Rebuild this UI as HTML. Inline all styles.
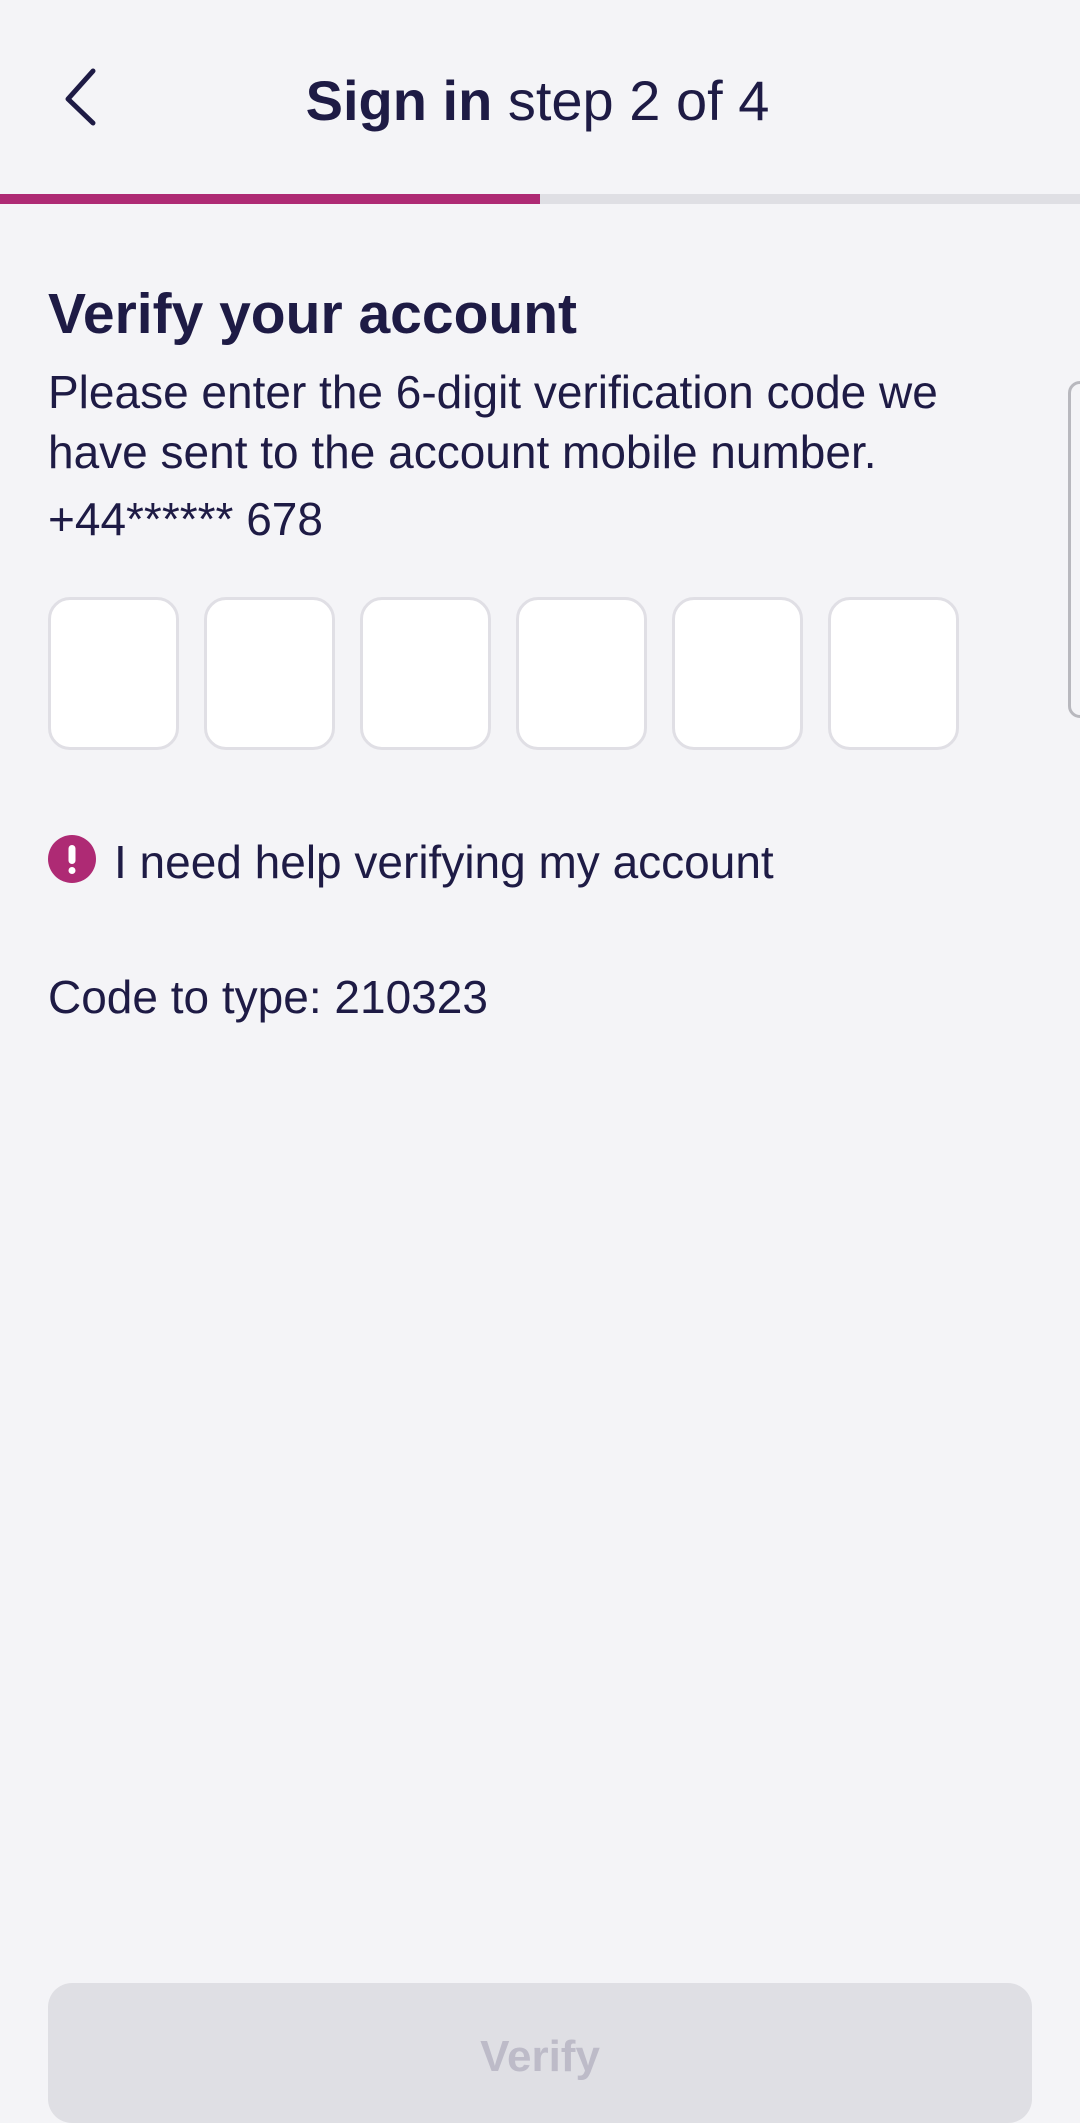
<!DOCTYPE html>
<html><head><meta charset="utf-8"><style>
*{margin:0;padding:0;box-sizing:border-box}
html,body{width:1080px;height:2097px;overflow:hidden;background:#f4f4f7;font-family:"Liberation Sans",sans-serif;color:#1e1b45}
.t{position:absolute;white-space:nowrap;line-height:1}
.box{position:absolute;top:597px;width:131px;height:153px;background:#fff;border:3px solid #e0dfe5;border-radius:22px}
</style></head><body>
<svg style="position:absolute;left:60px;top:68px" width="44" height="62" viewBox="0 0 44 62"><path d="M33 6 L8 34 L33 58" fill="none" stroke="#1e1b45" stroke-width="5" stroke-linecap="round" stroke-linejoin="round" transform="translate(0,-3)"/></svg>
<div class="t" style="left:0;width:1075px;text-align:center;top:73px;font-size:56px"><b>Sign in</b> step 2 of 4</div>
<div style="position:absolute;left:0;top:194px;width:1080px;height:10px;background:#dfdfe4"></div>
<div style="position:absolute;left:0;top:194px;width:540px;height:10px;background:#ae2a74"></div>
<div class="t" style="left:48px;top:286px;font-size:57px;font-weight:bold">Verify your account</div>
<div class="t" style="left:48px;top:369px;font-size:46px">Please enter the 6-digit verification code we</div>
<div class="t" style="left:48px;top:429px;font-size:46px">have sent to the account mobile number.</div>
<div class="t" style="left:48px;top:496px;font-size:46px">+44****** 678</div>
<div style="position:absolute;left:1068px;top:381px;width:40px;height:337px;border:3px solid #b8b8be;border-radius:12px"></div>
<div class="box" style="left:48px"></div>
<div class="box" style="left:204px"></div>
<div class="box" style="left:360px"></div>
<div class="box" style="left:516px"></div>
<div class="box" style="left:672px"></div>
<div class="box" style="left:828px"></div>
<svg style="position:absolute;left:48px;top:835px" width="48" height="48" viewBox="0 0 48 48"><circle cx="24" cy="24" r="24" fill="#ae2a74"/><rect x="20.5" y="10" width="7" height="19" rx="3.5" fill="#fff"/><circle cx="24" cy="35.5" r="3.5" fill="#fff"/></svg>
<div class="t" style="left:114px;top:839px;font-size:46px">I need help verifying my account</div>
<div class="t" style="left:48px;top:974px;font-size:46px">Code to type: 210323</div>
<div style="position:absolute;left:48px;top:1983px;width:984px;height:140px;background:#dfdfe4;border-radius:24px"></div>
<div class="t" style="left:48px;width:984px;text-align:center;top:2035px;font-size:44px;font-weight:bold;color:#bdbbc8">Verify</div>
</body></html>
